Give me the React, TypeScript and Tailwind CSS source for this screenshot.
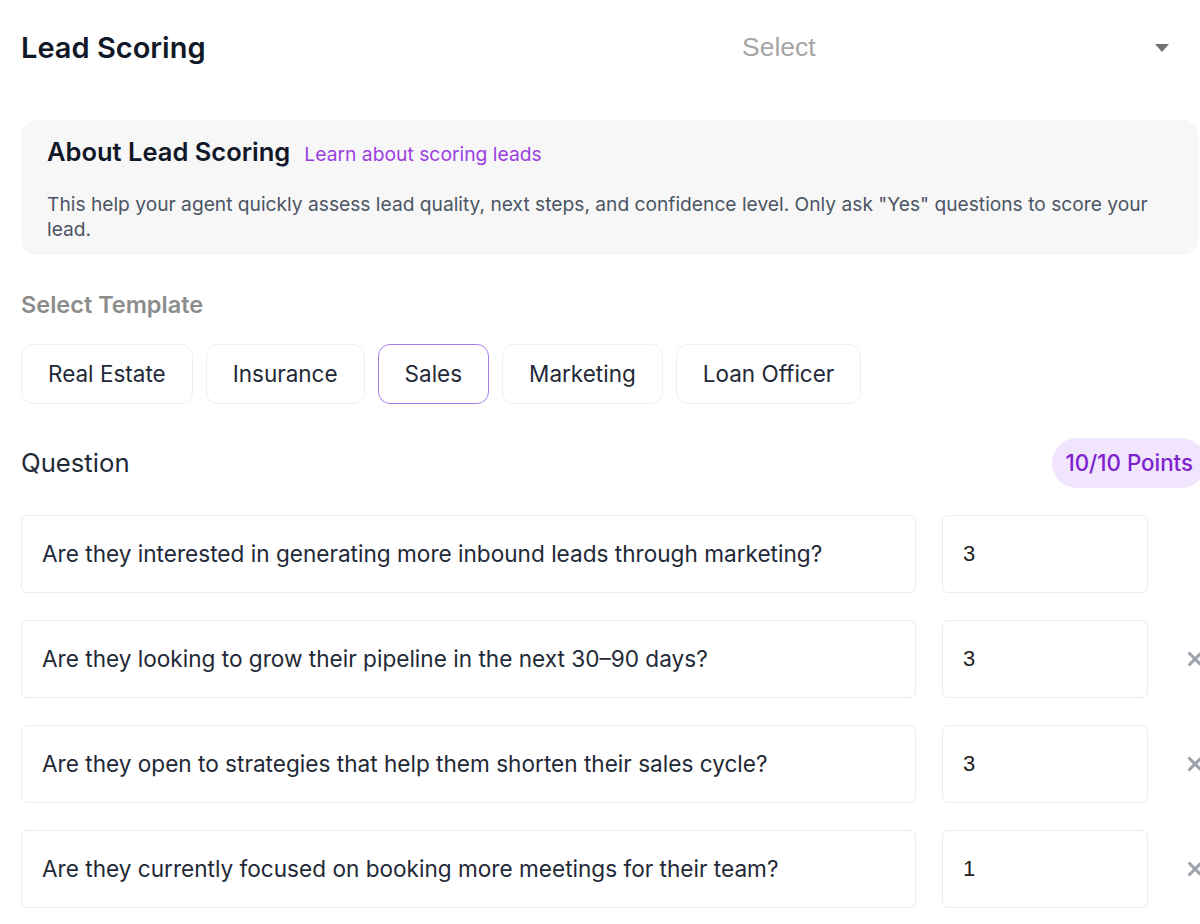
import { X } from "lucide-react";

const templates = ["Real Estate", "Insurance", "Sales", "Marketing", "Loan Officer"];

const questions = [
  { text: "Are they interested in generating more inbound leads through marketing?", score: 3, removable: false },
  { text: "Are they looking to grow their pipeline in the next 30–90 days?", score: 3, removable: true },
  { text: "Are they open to strategies that help them shorten their sales cycle?", score: 3, removable: true },
  { text: "Are they currently focused on booking more meetings for their team?", score: 1, removable: true },
];

const App = () => {
  return (
    <div className="w-[1200px] h-[924px] overflow-hidden bg-white font-['Inter',sans-serif]">
      <div className="w-[1240px] pl-[21px]">
        <div className="flex h-[96px] w-[1179px] items-center">
          <h1 className="text-[29px] font-semibold text-[#111827]">Lead Scoring</h1>
          <div className="ml-auto mr-[16px] flex w-[456px] items-center justify-between pl-[14px] pr-[15px]">
            <span className="font-['Liberation_Sans',sans-serif] text-[26.5px] text-[#a6a6a6]">Select</span>
            <svg width="14" height="8" viewBox="0 0 14 8">
              <path d="M0 0 L14 0 L7 8 Z" fill="#737373" />
            </svg>
          </div>
        </div>

        <div className="mt-[24px] w-[1177px] rounded-[16px] bg-[#f7f7f8] px-[26px] pt-[16px] pb-[13px]">
          <div className="flex items-baseline gap-[14px]">
            <h2 className="text-[25.5px] leading-[32px] font-semibold text-[#111827]">About Lead Scoring</h2>
            <a className="text-[19.3px] text-[#9b3fe0]">Learn about scoring leads</a>
          </div>
          <p className="mt-[23px] text-[19.2px] leading-[25px] text-[#4b5563]">
            This help your agent quickly assess lead quality, next steps, and confidence level. Only ask "Yes" questions to score your lead.
          </p>
        </div>

        <div className="mt-[35px] text-[23.5px] leading-[30px] font-semibold text-[#8c8c8c]">Select Template</div>

        <div className="mt-[24px] flex gap-[13px]">
          {templates.map((t) => (
            <button
              key={t}
              className={
                t === "Sales"
                  ? "h-[60px] rounded-[12px] border border-[#a57ee8] bg-white px-[26px] text-[22.5px] text-[#1f2937]"
                  : "h-[60px] rounded-[12px] border border-[#efefef] bg-white px-[26px] text-[22.5px] text-[#1f2937]"
              }
            >
              {t}
            </button>
          ))}
        </div>

        <div className="mt-[34px] flex w-[1185px] items-center justify-between">
          <span className="text-[25.7px] text-[#1f2937]">Question</span>
          <span className="flex h-[50px] items-center rounded-full bg-[#f1e4fd] px-[13px] text-[22.3px] font-medium text-[#7e22ce]">
            10/10 Points
          </span>
        </div>

        <div className="mt-[27px] flex flex-col gap-[27px]">
          {questions.map((q) => (
            <div key={q.text} className="flex items-center">
              <div className="flex h-[78px] w-[895px] items-center rounded-[6px] border border-[#ececec] pl-[20px] text-[22.6px] text-[#1f2937]">
                {q.text}
              </div>
              <div className="ml-[26px] flex h-[78px] w-[206px] items-center rounded-[6px] border border-[#ececec] pl-[20px] font-['Liberation_Sans',sans-serif] text-[22px] text-[#222]">
                {q.score}
              </div>
              <div className="ml-[36px] w-[22px]">
                {q.removable && <X size={22} strokeWidth={3.4} className="text-[#9ca3af]" />}
              </div>
            </div>
          ))}
        </div>
      </div>
    </div>
  );
};

export default App;
